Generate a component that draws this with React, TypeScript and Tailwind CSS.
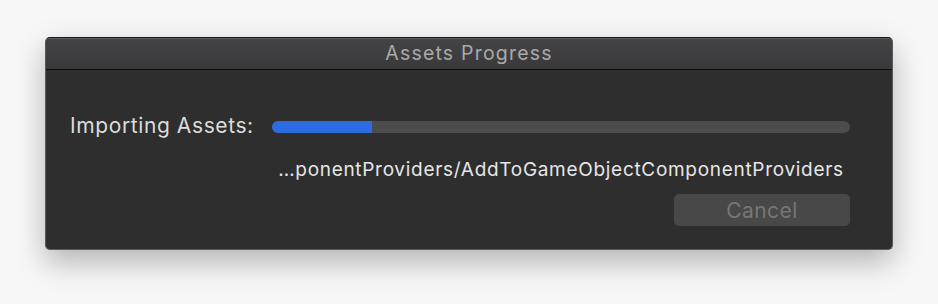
export default function App() {
  const progress = 17.3;

  return (
    <div className="w-[938px] h-[304px] bg-[#f7f7f7] pt-[37px] pl-[45px] font-['Inter',sans-serif]">
      <div className="w-[848px] h-[213px] rounded-[5px] border border-[#5a5a5a] border-t-[#1a1a1a] bg-[#2e2e2e] shadow-[0_12px_30px_rgba(0,0,0,0.28)] overflow-hidden flex flex-col">
        {/* Title bar */}
        <div className="h-[32px] shrink-0 bg-gradient-to-b from-[#434345] to-[#39393b] border-t border-[#5c5c5e] border-b border-b-[#0f0f0f] flex items-center justify-center">
          <span className="text-[19.5px] leading-none text-[#a9a9a9] tracking-[1.2px]">Assets Progress</span>
        </div>

        {/* Body */}
        <div className="flex-1 flex flex-col pl-[24px] pt-[45px]">
          <div className="flex items-center h-[24px]">
            <span className="w-[202px] shrink-0 text-[21px] leading-[24px] text-[#dcdcdc] tracking-[0.6px] -mt-[3px]">Importing Assets:</span>
            <div className="w-[578px] h-[12px] rounded-full bg-[#4c4c4c] overflow-hidden">
              <div className="h-full bg-[#2c6be0]" style={{ width: `${progress}%` }} />
            </div>
          </div>

          <div className="ml-[202px] w-[578px] mt-[20px] text-center text-[19px] leading-[22px] text-[#e6e6e6] tracking-[0.7px] whitespace-nowrap">
            …ponentProviders/AddToGameObjectComponentProviders
          </div>

          <div className="ml-[604px] mt-[13px] w-[176px] h-[32px] rounded-[5px] bg-[#484848] flex items-center justify-center">
            <span className="text-[21px] leading-none text-[#767676] tracking-[0.4px]">Cancel</span>
          </div>
        </div>
      </div>
    </div>
  );
}
